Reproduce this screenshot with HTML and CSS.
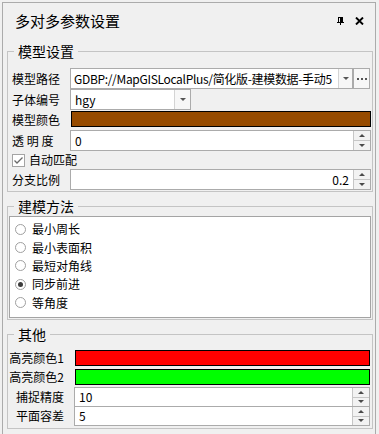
FILE: index.html
```html
<!DOCTYPE html>
<html lang="zh-CN">
<head>
<meta charset="utf-8">
<title>多对多参数设置</title>
<link rel="stylesheet" href="styles.css">
</head>
<body>
<div class="panel">
  <div class="titlebar">
    <span class="title">多对多参数设置</span>
    <span class="tb-icons">
      <svg class="pin" width="7" height="8" viewBox="0 0 7 8" aria-label="pin">
        <rect x="1" y="0" width="5" height="1" fill="#000"/>
        <rect x="1" y="0" width="1" height="5" fill="#000"/>
        <rect x="3" y="0" width="3" height="5" fill="#000"/>
        <rect x="0" y="5" width="7" height="1" fill="#000"/>
        <rect x="3" y="6" width="1" height="2" fill="#000"/>
      </svg>
      <svg class="close" width="9" height="8" viewBox="0 0 9 8" aria-label="close">
        <path d="M1 0.5L8 7.5M8 0.5L1 7.5" stroke="#000" stroke-width="1.9" fill="none"/>
      </svg>
    </span>
  </div>

  <fieldset class="group g-model">
    <legend>模型设置</legend>
    <div class="gbody">
      <div class="row r21">
        <span class="lbl">模型路径</span>
        <div class="combo combo-path">
          <span class="val val-path">GDBP://MapGISLocalPlus/简化版-建模数据-手动5</span>
          <span class="drop"><svg width="6" height="3" viewBox="0 0 6 3"><polygon points="0,0 6,0 3,3" fill="#555"/></svg></span>
        </div>
        <span class="more"><i></i><i></i><i></i></span>
      </div>
      <div class="row r21">
        <span class="lbl">子体编号</span>
        <div class="combo combo-sub">
          <span class="val">hgy</span>
          <span class="drop"><svg width="6" height="3" viewBox="0 0 6 3"><polygon points="0,0 6,0 3,3" fill="#555"/></svg></span>
        </div>
      </div>
      <div class="row r-color">
        <span class="lbl">模型颜色</span>
        <div class="swatch swatch-brown"></div>
      </div>
      <div class="row r21">
        <span class="lbl">透 明 度</span>
        <div class="spin">
          <span class="val">0</span>
          <span class="spinbtns"><span class="up"></span><span class="down"></span></span>
        </div>
      </div>
      <div class="row r-check">
        <span class="check"><svg width="13" height="13" viewBox="0 0 13 13"><rect x="0.5" y="0.5" width="12" height="12" fill="#fff" stroke="#a4a4a4"/><polyline points="2.5,6.5 5,9 10.5,3.5" fill="none" stroke="#6a6a6a" stroke-width="1.3"/></svg></span>
        <span class="check-lbl">自动匹配</span>
      </div>
      <div class="row r21">
        <span class="lbl">分支比例</span>
        <div class="spin">
          <span class="val val-right">0.2</span>
          <span class="spinbtns"><span class="up"></span><span class="down"></span></span>
        </div>
      </div>
    </div>
  </fieldset>

  <fieldset class="group g-method">
    <legend>建模方法</legend>
    <div class="gbody">
      <div class="list">
        <div class="radio-row"><span class="radio"></span><span class="radio-lbl">最小周长</span></div>
        <div class="radio-row"><span class="radio"></span><span class="radio-lbl">最小表面积</span></div>
        <div class="radio-row"><span class="radio"></span><span class="radio-lbl">最短对角线</span></div>
        <div class="radio-row"><span class="radio checked"></span><span class="radio-lbl">同步前进</span></div>
        <div class="radio-row"><span class="radio"></span><span class="radio-lbl">等角度</span></div>
      </div>
    </div>
  </fieldset>

  <fieldset class="group g-other">
    <legend>其他</legend>
    <div class="gbody">
      <div class="row r-sw">
        <span class="lbl lbl-r">高亮颜色1</span>
        <div class="swatch swatch-red"></div>
      </div>
      <div class="row r-sw">
        <span class="lbl lbl-r">高亮颜色2</span>
        <div class="swatch swatch-green"></div>
      </div>
      <div class="row r-spin first">
        <span class="lbl lbl-r">捕捉精度</span>
        <div class="spin">
          <span class="val">10</span>
          <span class="spinbtns"><span class="up"></span><span class="down"></span></span>
        </div>
      </div>
      <div class="row r-spin second">
        <span class="lbl lbl-r">平面容差</span>
        <div class="spin">
          <span class="val">5</span>
          <span class="spinbtns"><span class="up"></span><span class="down"></span></span>
        </div>
      </div>
    </div>
  </fieldset>
</div>
</body>
</html>
```

FILE: styles.css
```css
* {
  box-sizing: border-box;
}

html,
body {
  margin: 0;
  overflow: hidden;
}

body {
  padding: 2px;
  background: #f0f0f0;
  font-family: "Noto Sans CJK SC", "Microsoft YaHei", sans-serif;
  font-size: 12px;
  line-height: 16px;
  color: #000;
}

.panel {
  width: 374px;
  height: 432px;
  border: 1px solid #ababab;
  border-bottom: 0;
}

/* title bar */
.titlebar {
  height: 40px;
  display: flex;
  align-items: flex-start;
  padding: 8px 11px 0 12px;
}

.title {
  flex: 1;
  font-size: 15px;
  line-height: 20px;
}

.tb-icons {
  display: flex;
  align-items: flex-start;
  gap: 11px;
  margin-top: 6px;
}

.tb-icons svg {
  display: block;
}

/* group boxes */
.group {
  margin: 0 0 0 4px;
  width: 366px;
  min-width: 0;
  padding: 0;
  border: 1px solid #c4c4c4;
}

.group legend {
  font-size: 14px;
  line-height: 16px;
  padding: 0 4px;
  margin-left: 6px;
}

.g-model .gbody {
  padding: 9px 1px 1px 4px;
}

.g-method {
  margin-top: 6px;
}

.g-method .gbody {
  padding: 2px 1px 1px 1px;
}

.g-other {
  margin-top: 6px;
}

.g-other .gbody {
  padding: 6px 2px 2px 0;
}

/* rows */
.row {
  display: flex;
  align-items: center;
}

.r21 {
  height: 21px;
}

.r-color {
  height: 20px;
  align-items: flex-start;
}

.r-check {
  height: 18px;
}

.r-sw {
  height: 19px;
  align-items: flex-start;
}

.r-spin {
  height: 20px;
}

.r-spin.first {
  margin-top: 1px;
}

.r-spin.second {
  margin-top: -1px;
}

.lbl {
  flex: none;
  width: 58px;
  white-space: nowrap;
}

.r-color .lbl {
  margin-top: 2px;
}

.lbl-r {
  width: 56px;
  margin-right: 10px;
  display: flex;
  justify-content: flex-end;
}

.r-sw .lbl {
  margin-top: 2px;
}

/* combo boxes */
.combo {
  display: flex;
  height: 21px;
  border: 1px solid #ababab;
  background: #fff;
}

.combo-path {
  flex: 1;
  min-width: 0;
}

.combo-sub {
  width: 121px;
}

.combo .val {
  flex: 1;
  min-width: 0;
  padding-left: 4px;
  line-height: 19px;
  white-space: nowrap;
  overflow: hidden;
}

.combo .val-path {
  padding-left: 3px;
  letter-spacing: -0.32px;
}

.combo .drop {
  flex: none;
  width: 14px;
  border-left: 1px solid #d4d4d4;
  background: #f7f7f7;
  display: flex;
  align-items: center;
  justify-content: center;
}

.combo-sub .drop {
  width: 16px;
}

.drop svg {
  display: block;
}

.more {
  flex: none;
  width: 17px;
  height: 21px;
  margin-right: 1px;
  border: 1px solid #ababab;
  background: #f7f7f7;
  display: flex;
  align-items: center;
  justify-content: center;
  gap: 2px;
}

.more i {
  display: block;
  width: 2px;
  height: 2px;
  background: #555;
}

/* colour swatches */
.swatch {
  flex: 1;
  height: 16px;
  border: 1px solid #000;
}

.swatch-brown {
  margin-top: 1px;
  margin-left: 1px;
  background: #964b00;
}

.swatch-red {
  margin-top: 2px;
  margin-left: 1px;
  background: #ff0000;
}

.swatch-green {
  margin-top: 2px;
  margin-left: 1px;
  background: #00ff00;
}

/* spin boxes */
.spin {
  flex: 1;
  align-self: stretch;
  display: flex;
  border: 1px solid #ababab;
  background: #fff;
}

.spin .val {
  flex: 1;
  padding: 0 4px;
  line-height: 18px;
  white-space: nowrap;
}

.r21 .spin .val {
  line-height: 19px;
}

.spin .val-right {
  text-align: right;
}

.spinbtns {
  flex: none;
  width: 17px;
  display: flex;
  flex-direction: column;
  border-left: 1px solid #c6c6c6;
  background: #f2f2f2;
}

.spinbtns span {
  flex: 1;
  display: flex;
  align-items: center;
  justify-content: center;
}

.spinbtns .up {
  border-bottom: 1px solid #c6c6c6;
}

.spinbtns .up::after {
  content: "";
  border-left: 3px solid transparent;
  border-right: 3px solid transparent;
  border-bottom: 3px solid #4a4a4a;
}

.spinbtns .down::after {
  content: "";
  border-left: 3px solid transparent;
  border-right: 3px solid transparent;
  border-top: 3px solid #4a4a4a;
}

/* checkbox */
.check {
  display: block;
  width: 13px;
  height: 13px;
  margin-left: 0;
}

.check svg {
  display: block;
}

.check-lbl {
  margin-left: 4px;
}

/* radio list */
.list {
  height: 102px;
  border: 1px solid #a4a4a4;
  background: #fff;
  padding: 3px 0 0 5px;
}

.radio-row {
  height: 18.4px;
  display: flex;
  align-items: center;
}

.radio {
  flex: none;
  width: 11px;
  height: 11px;
  border-radius: 50%;
  border: 1px solid #a0a0a0;
  background: #fff;
  display: flex;
  align-items: center;
  justify-content: center;
}

.radio.checked::after {
  content: "";
  width: 5px;
  height: 5px;
  border-radius: 50%;
  background: #3c3c3c;
}

.radio-lbl {
  margin-left: 6px;
}
```
